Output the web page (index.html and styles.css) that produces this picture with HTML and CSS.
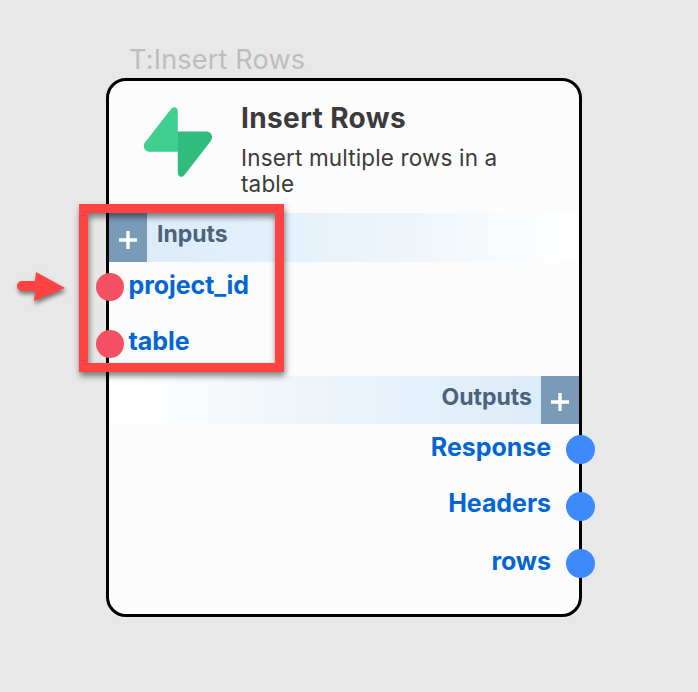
FILE: index.html
```html
<!DOCTYPE html>
<html lang="en">
<head>
<meta charset="utf-8">
<title>Insert Rows</title>
<link rel="stylesheet" href="styles.css">
</head>
<body>
<main class="canvas">
  <div class="node-label"><span>T:Insert Rows</span></div>
  <section class="node">
    <header class="node-head">
      <svg class="logo" viewBox="0 0 70 72" aria-hidden="true">
        <path fill="#3fcf8e" d="M35 45.700H6.500C1.500 45.700-.8 40.500 2 36.500L28 3C30.500 0 34.700 1 34.700 5z"/>
        <path fill="#2fbc7d" d="M34.700 25.500H63.500C68.500 25.500 70.800 31 67.800 35L41.500 69C39 72.200 34.800 71 34.800 67z"/>
      </svg>
      <div class="head-text">
        <h1><span>Insert Rows</span></h1>
        <p><span>Insert multiple rows in a table</span></p>
      </div>
    </header>
    <div class="bar bar-in">
      <button class="add" aria-label="Add input"><svg viewBox="0 0 20 20"><path d="M1 10H19M10 1V19"/></svg></button>
      <h2><span>Inputs</span></h2>
    </div>
    <ul class="ports ports-in">
      <li><i class="dot"></i><span>project_id</span></li>
      <li><i class="dot"></i><span>table</span></li>
    </ul>
    <div class="bar bar-out">
      <h2><span>Outputs</span></h2>
      <button class="add" aria-label="Add output"><svg viewBox="0 0 20 20"><path d="M1 10H19M10 1V19"/></svg></button>
    </div>
    <ul class="ports ports-out">
      <li><span>Response</span><i class="dot"></i></li>
      <li><span>Headers</span><i class="dot"></i></li>
      <li><span>rows</span><i class="dot"></i></li>
    </ul>
  </section>
  <div class="highlight"></div>
  <svg class="arrow" viewBox="0 0 70 50" aria-hidden="true">
    <path d="M12 21H25L26 12L55 28L24 41L25 31H12A5 5 0 0 1 12 21Z"/>
  </svg>
</main>
</body>
</html>
```
FILE: styles.css
```css
* { box-sizing: border-box; }
body {
  margin: 0;
  background: #e8e8e8;
  font-family: Inter, "Liberation Sans", sans-serif;
}
h1, h2, p, ul { margin: 0; padding: 0; }
.canvas {
  position: relative;
  width: 698px;
  height: 692px;
  padding: 42px 0 0 106px;
  overflow: hidden;
}
.node-label {
  height: 36px;
  padding-left: 23px;
  font-size: 27px;
  line-height: 36px;
  letter-spacing: .2px;
  color: #bdbdbd;
}
.node {
  width: 476px;
  height: 539px;
  border: 3px solid #000;
  border-radius: 20px;
  background: #fcfcfc;
}
.node-head {
  display: flex;
  height: 132px;
  padding: 25px 0 0 34px;
}
.logo {
  flex: none;
  width: 70px;
  height: 72px;
  overflow: visible;
}
.head-text { margin-left: 28px; width: 290px; }
h1 {
  margin-top: -5px;
  font-size: 28px;
  line-height: 34px;
  font-weight: 700;
  letter-spacing: .38px;
  color: #3b3b3b;
}
p {
  margin-top: 10px;
  font-size: 22.500px;
  line-height: 26px;
  letter-spacing: .15px;
  color: #3b3b3b;
}
.bar { display: flex; }
.bar-in {
  height: 49px;
  background: linear-gradient(90deg, #d9eaf7, #e6f2fb 42%, #eff6fb 65%, #f7fbfe 82%, #fff);
}
.bar-out {
  height: 48px;
  justify-content: flex-end;
  background: linear-gradient(270deg, #d9eaf7, #e6f2fb 38%, #eff5fa 60%, #fff 95%);
}
h2 {
  font-size: 23px;
  line-height: 42px;
  font-weight: 700;
  color: #4b637d;
}
.bar-in h2 { margin-left: 10px; }
.bar-out h2 { margin-right: 9px; }
.add {
  display: flex;
  align-items: center;
  justify-content: center;
  width: 38px;
  padding: 5px 0 0;
  border: 0;
  background: #799bb8;
}
.bar-out .add { padding-top: 4px; }
.add svg {
  width: 20px;
  height: 20px;
  fill: none;
  stroke: #fff;
  stroke-width: 3.400;
}
.ports {
  list-style: none;
  font-size: 25px;
  line-height: 30px;
  font-weight: 700;
  color: #0365d6;
}
.ports li { display: flex; align-items: center; }
.ports span { margin-top: -4px; letter-spacing: -.05px; }
.ports li:nth-child(2) span { margin-top: -6px; }
.dot { flex: none; border-radius: 50%; }
.ports-in { height: 114px; }
.ports-in li { margin-left: -13px; }
.ports-in li:first-child { height: 50px; }
.ports-in li:last-child { height: 64px; }
.ports-in .dot {
  width: 28px;
  height: 28px;
  margin-right: 4.500px;
  background: #f55064;
}
.ports-out li {
  justify-content: flex-end;
  margin-right: -15.500px;
}
.ports-out li:first-child { height: 50px; }
.ports-out li:nth-child(2) { height: 64px; }
.ports-out li:last-child { height: 50px; }
.ports-out .dot {
  width: 29px;
  height: 29px;
  margin-left: 14.500px;
  background: #3e89fb;
}
.highlight {
  position: absolute;
  left: 79px;
  top: 204px;
  width: 205px;
  height: 168px;
  border: 9px solid #ff4343;
  filter: drop-shadow(1px 4px 3px rgba(0, 0, 0, .5));
}
.arrow {
  position: absolute;
  left: 10px;
  top: 260px;
  width: 70px;
  height: 50px;
  fill: #ff4343;
  filter: drop-shadow(1px 3px 2px rgba(0, 0, 0, .5));
}
```
